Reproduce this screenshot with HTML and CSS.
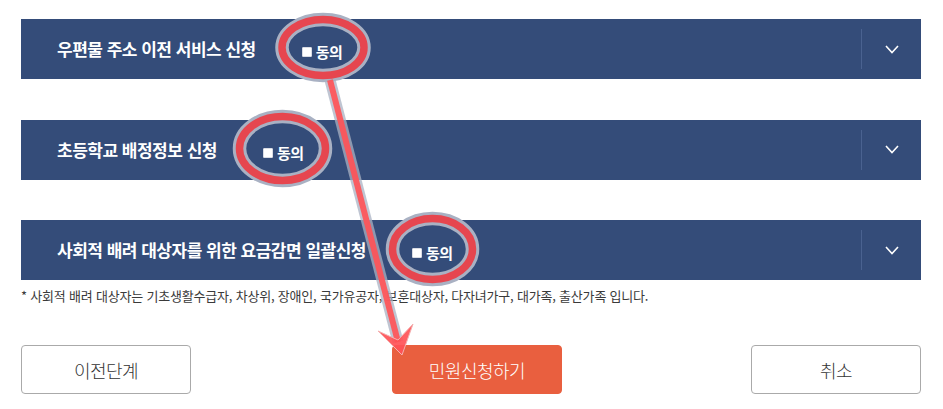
FILE: index.html
```html
<!DOCTYPE html>
<html lang="ko">
<head>
<meta charset="utf-8">
<link rel="stylesheet" href="styles.css">
</head>
<body>
<div class="page">
  <div class="bars">
    <div class="bar">
      <span class="title">우편물 주소 이전 서비스 신청</span>
      <label class="agree"><span class="box"></span>동의</label>
      <div class="toggle"><svg width="14" height="9" viewBox="0 0 14 9"><path d="M1 1 L7 7.5 L13 1" fill="none" stroke="#fff" stroke-width="1.6"/></svg></div>
    </div>
    <div class="bar">
      <span class="title">초등학교 배정정보 신청</span>
      <label class="agree"><span class="box"></span>동의</label>
      <div class="toggle"><svg width="14" height="9" viewBox="0 0 14 9"><path d="M1 1 L7 7.5 L13 1" fill="none" stroke="#fff" stroke-width="1.6"/></svg></div>
    </div>
    <div class="bar">
      <span class="title">사회적 배려 대상자를 위한 요금감면 일괄신청</span>
      <label class="agree"><span class="box"></span>동의</label>
      <div class="toggle"><svg width="14" height="9" viewBox="0 0 14 9"><path d="M1 1 L7 7.5 L13 1" fill="none" stroke="#fff" stroke-width="1.6"/></svg></div>
    </div>
  </div>
  <p class="note">* 사회적 배려 대상자는 기초생활수급자, 차상위, 장애인, 국가유공자, 보훈대상자, 다자녀가구, 대가족, 출산가족 입니다.</p>
  <div class="actions">
    <button class="btn">이전단계</button>
    <button class="btn primary">민원신청하기</button>
    <button class="btn last">취소</button>
  </div>
</div>
<svg class="marks" width="943" height="409" viewBox="0 0 943 409">
  <g fill="none">
    <ellipse cx="323" cy="47.5" rx="41" ry="28" stroke="#a9b1c3" stroke-width="13.5"/>
    <ellipse cx="323" cy="47.5" rx="41" ry="28" stroke="#e6464f" stroke-width="7.5"/>
    <ellipse cx="282.5" cy="148.5" rx="43" ry="32" stroke="#a9b1c3" stroke-width="13.5"/>
    <ellipse cx="282.5" cy="148.5" rx="43" ry="32" stroke="#e6464f" stroke-width="7.5"/>
    <ellipse cx="432.5" cy="249" rx="40" ry="30.5" stroke="#a9b1c3" stroke-width="13.5"/>
    <ellipse cx="432.5" cy="249" rx="40" ry="30.5" stroke="#e6464f" stroke-width="7.5"/>
    <line x1="330" y1="80" x2="398" y2="342" stroke="#a9b1c3" stroke-opacity="0.75" stroke-width="11"/>
    <line x1="330" y1="80" x2="398" y2="342" stroke="#ff5257" stroke-opacity="0.92" stroke-width="6"/>
  </g>
  <path d="M378 331 L402 355 L413 324 L398 340 Z" fill="#ff5257" fill-opacity="0.92" stroke="#f4b0b0" stroke-width="1"/>
</svg>
</body>
</html>
```
FILE: styles.css
```css
html, body {
  margin: 0;
  padding: 0;
  background: #fff;
}
body {
  font-family: "Noto Sans CJK KR", "Noto Sans", sans-serif;
  width: 943px;
  height: 409px;
  overflow: hidden;
  position: relative;
}
.page {
  padding: 19px 22px 0 21px;
  width: 900px;
}
.bars {
  display: flex;
  flex-direction: column;
  gap: 40.5px;
}
.bar {
  height: 60px;
  background: #344c79;
  display: flex;
  align-items: center;
  color: #fff;
}
.title {
  padding-left: 36px;
  font-size: 17px;
  font-weight: 700;
  letter-spacing: -0.5px;
  line-height: 20px;
}
.agree {
  margin-left: 46px;
  padding-top: 6px;
  font-size: 15px;
  font-weight: 700;
  letter-spacing: -0.5px;
  display: flex;
  align-items: center;
  line-height: 18px;
}
.box {
  width: 8px;
  height: 8px;
  background: #fff;
  border: 1px solid #d9dce4;
  border-radius: 1px;
  margin-right: 4px;
}
.toggle {
  margin-left: auto;
  width: 59px;
  height: 40px;
  border-left: 1px solid #4a6290;
  display: flex;
  align-items: center;
  justify-content: center;
}
.toggle svg {
  display: block;
}
.note {
  margin: 8px 0 0;
  font-size: 13px;
  line-height: 16px;
  color: #3a3a3a;
  letter-spacing: -0.2px;
}
.actions {
  display: flex;
  margin-top: 41px;
}
.btn {
  width: 170px;
  height: 49px;
  border: 1px solid #aaa;
  border-radius: 4px;
  background: #fff;
  color: #333;
  font-family: "Noto Sans CJK KR", "Noto Sans", sans-serif;
  font-size: 18px;
  font-weight: 300;
  letter-spacing: -0.5px;
  padding: 0;
}
.btn.primary {
  margin-left: 201px;
  background: #e95f3f;
  border-color: #e95f3f;
  color: #fff;
}
.btn.last {
  margin-left: auto;
}
.marks {
  position: absolute;
  left: 0;
  top: 0;
  pointer-events: none;
}
```
